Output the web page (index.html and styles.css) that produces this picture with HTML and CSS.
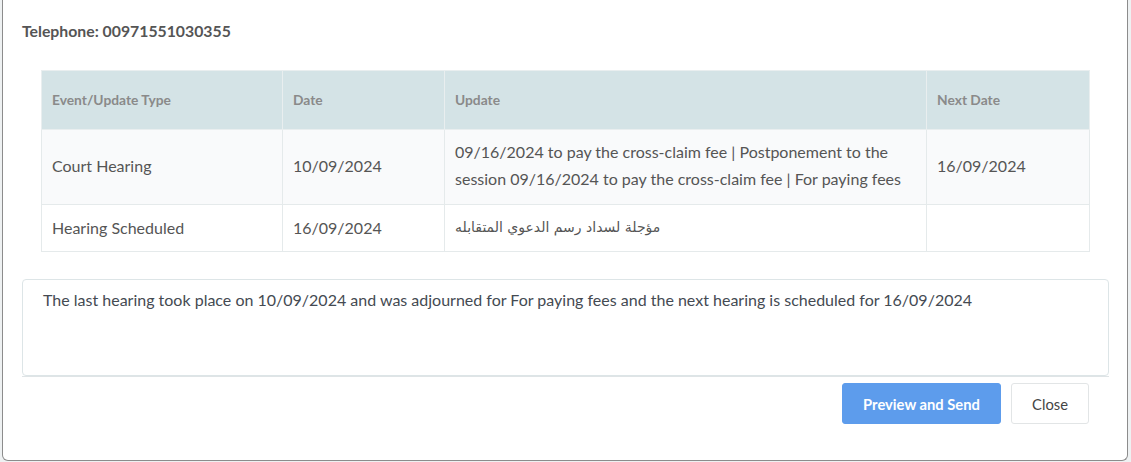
FILE: index.html
```html
<!DOCTYPE html>
<html lang="en">
<head>
<meta charset="utf-8">
<title>Hearing update</title>
<link rel="stylesheet" href="styles.css">
</head>
<body>
<div class="page">
  <div class="modal">
    <div class="modal-body">
      <div class="phone">Telephone: 00971551030355</div>
      <table class="events">
        <colgroup>
          <col class="c1"><col class="c2"><col class="c3"><col class="c4">
        </colgroup>
        <thead>
          <tr><th>Event/Update Type</th><th>Date</th><th>Update</th><th>Next Date</th></tr>
        </thead>
        <tbody>
          <tr class="odd">
            <td>Court Hearing</td>
            <td>10/09/2024</td>
            <td>09/16/2024 to pay the cross-claim fee | Postponement to the session 09/16/2024 to pay the cross-claim fee | For paying fees</td>
            <td>16/09/2024</td>
          </tr>
          <tr>
            <td>Hearing Scheduled</td>
            <td>16/09/2024</td>
            <td class="ar" dir="auto">مؤجلة لسداد رسم الدعوي المتقابله</td>
            <td></td>
          </tr>
        </tbody>
      </table>
      <div class="message">The last hearing took place on 10/09/2024 and was adjourned for For paying fees and the next hearing is scheduled for 16/09/2024</div>
    </div>
    <div class="modal-footer">
      <button class="btn btn-primary">Preview and Send</button>
      <button class="btn btn-default">Close</button>
    </div>
  </div>
</div>
</body>
</html>
```

FILE: styles.css
```css
* { box-sizing: border-box; }
html, body { margin: 0; padding: 0; }
body {
  background: #eef1f2;
  font-family: Lato, "Noto Sans", "DejaVu Sans", sans-serif;
  color: #555;
  width: 1131px;
  height: 462px;
  overflow: hidden;
}
.page {
  padding-left: 2px;
}
.modal {
  width: 1126px;
  height: 461px;
  background: #fff;
  border: 1px solid #8c8c8c;
  border-top: none;
  border-radius: 0 0 6px 6px;
  display: flex;
  flex-direction: column;
}
.modal-body {
  padding: 21px 18px 0 19px;
}
.phone {
  font-weight: 700;
  font-size: 15.8px;
  line-height: 20px;
  color: #555;
}
.events {
  margin: 29px 19px 0 19px;
  width: 1048px;
  border-collapse: collapse;
  table-layout: fixed;
}
.c1 { width: 241px; }
.c2 { width: 162px; }
.c3 { width: 482px; }
.c4 { width: 163px; }
.events th, .events td {
  border: 1px solid #e5eaeb;
  text-align: left;
  vertical-align: middle;
}
.events th {
  background: #d4e3e6;
  color: #8a8a8a;
  font-weight: 700;
  font-size: 13.8px;
  line-height: 20px;
  padding: 19px 10px 19px;
  border-color: #e9eeef;
}
.events td {
  font-size: 16px;
  line-height: 27px;
  padding: 9px 10px 10px;
  color: #555;
}
.events tr.odd td { background: #f9fafb; padding-top: 8px; padding-bottom: 12px; }
.events td.ar {
  font-family: "DejaVu Sans", sans-serif;
  font-size: 14px;
  text-align: left;
}
.message {
  margin-top: 27px;
  height: 97px;
  border: 1px solid #dde5e7;
  border-radius: 4px;
  padding: 10px 20px;
  font-size: 16px;
  line-height: 20px;
  color: #444a52;
}
.modal-footer {
  margin: 0 18px 0 19px;
  border-top: 1px solid #dfe4e6;
  padding: 6px 20px 0 0;
  display: flex;
  justify-content: flex-end;
  gap: 10px;
}
.btn {
  height: 41px;
  font-family: Lato, "Noto Sans", sans-serif;
  font-size: 14.75px;
  border-radius: 3px;
  cursor: pointer;
}
.btn-primary {
  width: 159px;
  background: #5d9cec;
  border: 1px solid #5d9cec;
  color: #fff;
  font-weight: 700;
}
.btn-default {
  width: 78px;
  background: #fff;
  border: 1px solid #e2e5e6;
  color: #444;
}
```
